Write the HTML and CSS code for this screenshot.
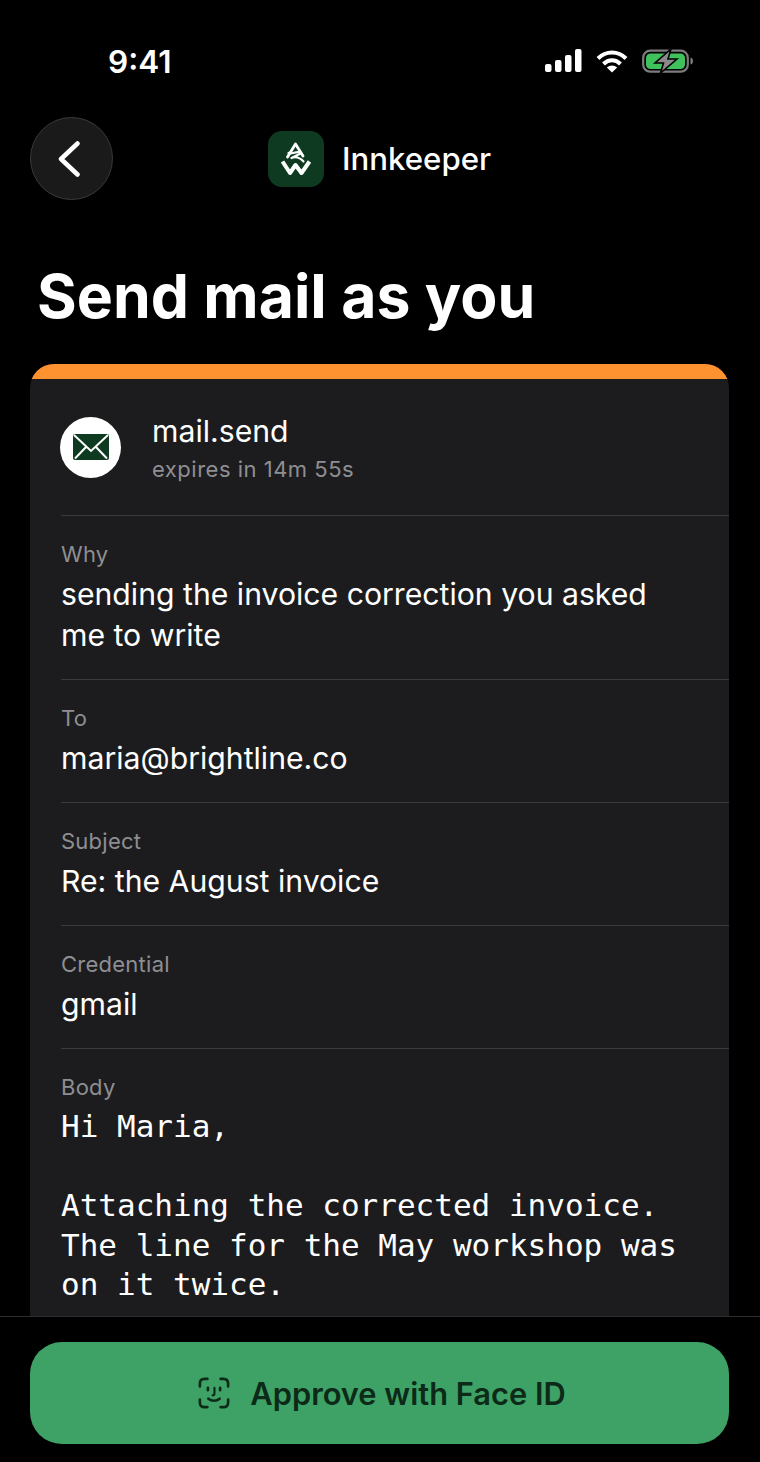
FILE: index.html
```html
<!DOCTYPE html>
<html>
<head>
    <title>Innkeeper</title>
    <link rel="stylesheet" href="styles.css">
</head>
<body>
    <div class="screen">
        <div class="content">
            <div class="status-bar">
                <span class="time">9:41</span>
                <div class="status-icons">
                    <svg width="38" height="24" viewBox="0 0 38 24" fill="#fff">
                        <rect x="1" y="15" width="6.500" height="8" rx="2"/>
                        <rect x="11" y="11" width="6.500" height="12" rx="2"/>
                        <rect x="21" y="6" width="6.500" height="17" rx="2"/>
                        <rect x="31" y="0" width="6.500" height="23" rx="2"/>
                    </svg>
                    <svg width="32" height="24" viewBox="0 0 32 24" fill="none" stroke="#fff">
                        <path d="M2 9.500C10 1.500 22 1.500 30 9.500" stroke-width="4"/>
                        <path d="M7.500 15C12.500 10 19.500 10 24.500 15" stroke-width="4"/>
                        <path d="M16 23.500L10.800 18.600C13.800 15.800 18.200 15.800 21.200 18.600Z" fill="#fff" stroke="none"/>
                    </svg>
                    <svg class="battery" width="52" height="24" viewBox="0 0 52 24" fill="none">
                        <rect x="1.200" y="1.700" width="44.600" height="21" rx="7" stroke="#7c7c7c" stroke-width="2.200"/>
                        <rect x="4" y="4.500" width="39" height="15.500" rx="4.500" fill="#3fc25b"/>
                        <path d="M48.500 8.500C50.500 9 51 10.500 51 12C51 13.500 50.500 15 48.500 15.500Z" fill="#7c7c7c"/>
                        <path d="M29 0L13 14H21.500L18.500 24L35 10H26Z" fill="#8a8a8a" stroke="#000" stroke-width="1.600"/>
                    </svg>
                </div>
            </div>

            <div class="nav">
                <button class="back">
                    <svg width="26" height="36" viewBox="0 0 26 36" fill="none" stroke="#fff" stroke-width="4.500" stroke-linecap="round" stroke-linejoin="round">
                        <path d="M20.500 2.500L4 18L20.500 33.500"/>
                    </svg>
                </button>
                <div class="brand">
                    <div class="brand-logo">
                        <svg width="34" height="34" viewBox="0 0 34 34" fill="none" stroke="#fff" stroke-width="2.200" stroke-linejoin="round" stroke-linecap="round">
                            <path d="M8.500 15L16.500 2L24 14" stroke-width="2.800"/>
                            <path d="M9.500 11C13 13 18 8 22 11"/>
                            <path d="M21.500 11.500L12.500 16C16.500 14.500 21 15.500 24.500 19.500"/>
                            <path d="M3.500 19.500L11 31L16.500 23L22.500 31L30.500 19.500" stroke-width="4" stroke-linecap="butt"/>
                        </svg>
                    </div>
                    <span class="brand-name">Innkeeper</span>
                </div>
            </div>

            <h1 class="title">Send mail as you</h1>

            <div class="card">
                <div class="card-stripe"></div>
                <div class="card-head">
                    <div class="mail-icon">
                        <svg width="36" height="26" viewBox="0 0 36 26">
                            <rect width="36" height="26" rx="2" fill="#0f3a22"/>
                            <path d="M1 1L18 17L35 1M2 24.500L13.500 12.500M34 24.500L22.500 12.500" fill="none" stroke="#fff" stroke-width="2"/>
                        </svg>
                    </div>
                    <div class="head-text">
                        <div class="scope">mail.send</div>
                        <div class="expires">expires in 14m 55s</div>
                    </div>
                </div>
                <div class="field">
                    <div class="label">Why</div>
                    <div class="value">sending the invoice correction you asked me to write</div>
                </div>
                <div class="field">
                    <div class="label">To</div>
                    <div class="value">maria@brightline.co</div>
                </div>
                <div class="field">
                    <div class="label">Subject</div>
                    <div class="value">Re: the August invoice</div>
                </div>
                <div class="field">
                    <div class="label">Credential</div>
                    <div class="value">gmail</div>
                </div>
                <div class="field">
                    <div class="label">Body</div>
                    <pre class="body-text">Hi Maria,

Attaching the corrected invoice.
The line for the May workshop was
on it twice.</pre>
                </div>
            </div>
        </div>

        <div class="footer">
            <button class="approve">
                <svg width="32" height="32" viewBox="0 0 34 34" fill="none" stroke="#0c2a17" stroke-width="2.800" stroke-linecap="round" stroke-linejoin="round">
                    <path d="M2 10V7C2 3.500 3.500 2 7 2H10"/>
                    <path d="M24 2H27C30.500 2 32 3.500 32 7V10"/>
                    <path d="M32 24V27C32 30.500 30.500 32 27 32H24"/>
                    <path d="M10 32H7C3.500 32 2 30.500 2 27V24"/>
                    <path d="M10.500 11.500V14M23.500 11.500V14"/>
                    <path d="M17.500 11.500V17.500C17.500 19 16.800 19.500 15.500 19.500" stroke-width="2.200"/>
                    <path d="M11 23C14.500 26 19.500 26 23 23"/>
                </svg>
                <span>Approve with Face ID</span>
            </button>
        </div>
    </div>
</body>
</html>
```

FILE: styles.css
```css
body {
    margin: 0;
    padding: 0;
    background-color: #000;
    color: #fff;
    font-family: Inter, "Liberation Sans", sans-serif;
}

.screen {
    width: 760px;
    height: 1462px;
    display: flex;
    flex-direction: column;
    overflow: hidden;
}

.content {
    flex: 1;
    min-height: 0;
    overflow: hidden;
}

.status-bar {
    height: 117px;
    box-sizing: border-box;
    padding: 44px 66px 0 108px;
    display: flex;
    justify-content: space-between;
    align-items: flex-start;
}

.time {
    font-size: 31.500px;
    line-height: 36px;
    font-weight: 600;
}

.status-icons {
    display: flex;
    align-items: center;
    gap: 14px;
    padding-top: 5px;
}

.nav {
    height: 84px;
    padding-left: 30px;
    display: flex;
    align-items: center;
}

.back {
    width: 83px;
    height: 83px;
    padding: 0 4px 0 0;
    align-self: flex-start;
    border-radius: 50%;
    border: 1.5px solid #3a3a3c;
    background-color: #1a1a1a;
    display: flex;
    align-items: center;
    justify-content: center;
}

.brand {
    display: flex;
    align-items: center;
    gap: 18px;
    margin-left: 155px;
}

.brand-logo {
    width: 56px;
    height: 56px;
    border-radius: 14px;
    background-color: #0f3a22;
    display: flex;
    align-items: center;
    justify-content: center;
}

.brand-name {
    font-size: 31.200px;
    font-weight: 500;
}

.title {
    margin: 0;
    padding: 60px 37px 33px;
    font-size: 60.700px;
    line-height: 70px;
    font-weight: 700;
}

.card {
    margin: 0 31px 0 30px;
    background-color: #1c1c1e;
    border-radius: 24px 24px 0 0;
    overflow: hidden;
}

.card-stripe {
    height: 15px;
    background-color: #ff9230;
}

.card-head {
    height: 136px;
    padding-left: 30px;
    display: flex;
    align-items: center;
    gap: 31px;
}

.mail-icon {
    width: 61px;
    height: 61px;
    border-radius: 50%;
    background-color: #fff;
    display: flex;
    align-items: center;
    justify-content: center;
}

.head-text {
    padding-top: 5px;
}

.scope {
    font-size: 30.200px;
    line-height: 38px;
}

.expires {
    margin-top: 1px;
    font-size: 22px;
    line-height: 36px;
    letter-spacing: 0.5px;
    color: #8e8e93;
}

.field {
    margin-left: 31px;
    border-top: 1px solid #3a3a3c;
    padding: 25px 0 23px;
}

.label {
    font-size: 22px;
    line-height: 27px;
    letter-spacing: 0.25px;
    color: #8e8e93;
}

.value {
    font-size: 30.200px;
    line-height: 41px;
    padding-top: 6px;
    max-width: 620px;
}

.body-text {
    margin: 6px 0 0;
    padding-bottom: 40px;
    font-family: "DejaVu Sans Mono", "Liberation Mono", monospace;
    font-size: 31px;
    line-height: 39.500px;
}

.footer {
    flex: none;
    height: 146px;
    box-sizing: border-box;
    border-top: 1px solid #2c2c2e;
    padding: 25px 31px 0 30px;
    background-color: #000;
}

.approve {
    width: 100%;
    height: 102px;
    padding: 0 0 0 5px;
    border: none;
    border-radius: 32px;
    background-color: #3ea267;
    color: #0c2a17;
    font-family: inherit;
    font-size: 30.800px;
    font-weight: 600;
    display: flex;
    align-items: center;
    justify-content: center;
    gap: 20px;
}
```
